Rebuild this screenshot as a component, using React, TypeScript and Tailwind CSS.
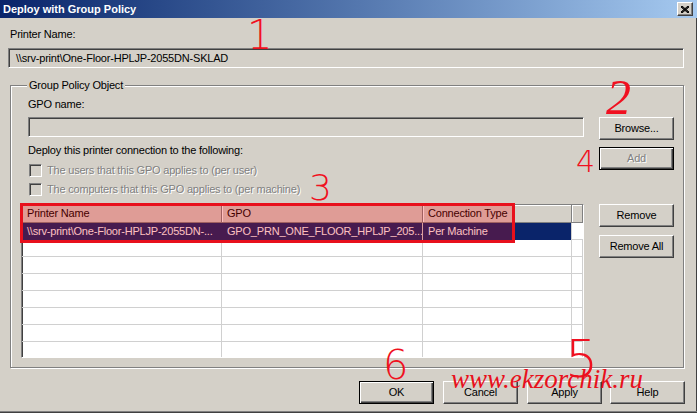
const btn =
  "h-[23px] w-[75px] flex items-center justify-center bg-[#d4d0c8] border border-t-white border-l-white border-r-[#404040] border-b-[#404040] shadow-[inset_-1px_-1px_0_#808080] text-[11px] text-black";
const defBtn =
  "h-[23px] w-[75px] flex items-center justify-center bg-[#d4d0c8] border border-black shadow-[inset_1px_1px_0_#fff,inset_-1px_-1px_0_#404040,inset_-2px_-2px_0_#808080] text-[11px]";
const sunken =
  "border border-t-[#808080] border-l-[#808080] border-b-white border-r-white shadow-[inset_1px_1px_0_#404040]";
const disabled = "text-[#808080] [text-shadow:1px_1px_0_#fff]";
const mark = "absolute text-[#f01020] leading-none font-['DejaVu_Sans',sans-serif] font-extralight tracking-normal";

const columns = ["Printer Name", "GPO", "Connection Type", ""];

export default function App() {
  const rows = [0, 1, 2, 3, 4, 5, 6, 7];

  return (
    <div className="relative w-[697px] h-[413px] overflow-hidden bg-[#d4d0c8] font-['Liberation_Sans',Arial,sans-serif] text-[11px] tracking-[-0.2px] text-black shadow-[inset_0_-1px_0_#404040,inset_0_-2px_0_#808080,inset_-1px_0_0_#404040]">
      {/* title bar */}
      <div className="h-[18px] flex items-center bg-gradient-to-r from-[#0a246a] to-[#a6caf0] pl-[3px] pr-[4px]">
        <span className="text-white font-bold text-[11px] tracking-normal leading-none">
          Deploy with Group Policy
        </span>
        <button className="ml-auto w-[16px] h-[14px] flex items-center justify-center bg-[#d4d0c8] border border-t-white border-l-white border-r-[#404040] border-b-[#404040] shadow-[inset_-1px_-1px_0_#808080]">
          <svg width="8" height="7" viewBox="0 0 8 7">
            <path d="M0 0L8 7M1 0L8 6M0 1L7 7M8 0L0 7M7 0L0 6M8 1L1 7" stroke="#000" strokeWidth="1" />
          </svg>
        </button>
      </div>

      <div className="pl-[8px] pr-[13px]">
        <div className="mt-[10px] ml-[2px] h-[13px] leading-[13px]">Printer Name:</div>
        <div className={`mt-[7px] h-[20px] flex items-center pl-[7px] ${sunken}`}>
          \\srv-print\One-Floor-HPLJP-2055DN-SKLAD
        </div>

        {/* group box */}
        <div className="mt-[17px] ml-[2px] h-[283px] border border-[#808080] shadow-[inset_1px_1px_0_#fff,1px_1px_0_#fff] pl-[10px] pr-[9px]">
          <div className="-mt-[7px] ml-[6px] h-[13px] leading-[13px] px-[2px] bg-[#d4d0c8] w-fit">
            Group Policy Object
          </div>
          <div className="flex">
            <div className="w-[563px]">
              <div className="mt-[6px] pl-[7px] h-[13px] leading-[13px]">GPO name:</div>
              <div className={`mt-[6px] ml-[7px] h-[20px] ${sunken}`} />
              <div className="mt-[7px] pl-[7px] h-[13px] leading-[13px]">
                Deploy this printer connection to the following:
              </div>
              <div className="mt-[4px]">
                {[
                  "The users that this GPO applies to (per user)",
                  "The computers that this GPO applies to (per machine)",
                ].map((t) => (
                  <div key={t} className="h-[19px] flex items-center pl-[8px] gap-[5px]">
                    <span className={`w-[13px] h-[13px] bg-[#d4d0c8] ${sunken}`} />
                    <span className={disabled}>{t}</span>
                  </div>
                ))}
              </div>

              {/* list view */}
              <div className={`mt-[5px] h-[154px] overflow-hidden bg-white ${sunken}`}>
                <div className="grid grid-cols-[200px_201px_149px_1fr] h-[18px] bg-[#d4d0c8]">
                  {columns.map((c, i) => (
                    <div
                      key={i}
                      className="pl-[5px] flex items-center border-r border-b border-[#808080] shadow-[inset_1px_1px_0_#fff] whitespace-nowrap overflow-hidden"
                    >
                      {c}
                    </div>
                  ))}
                </div>
                {rows.map((r) => (
                  <div key={r} className="grid grid-cols-[200px_201px_149px_1fr] h-[17px]">
                    {r === 0 ? (
                      <>
                        <div className="pl-[5px] flex items-center bg-[#0a246a] text-white border-r border-[#0a246a] whitespace-nowrap overflow-hidden">
                          \\srv-print\One-Floor-HPLJP-2055DN-...
                        </div>
                        <div className="pl-[5px] flex items-center bg-[#0a246a] text-white border-r border-[#d0d0d0] whitespace-nowrap overflow-hidden">
                          GPO_PRN_ONE_FLOOR_HPLJP_205...
                        </div>
                        <div className="pl-[5px] flex items-center bg-[#0a246a] text-white border-r border-[#d0d0d0] whitespace-nowrap overflow-hidden">
                          Per Machine
                        </div>
                        <div className="border-b border-[#d0d0d0]" />
                      </>
                    ) : (
                      [0, 1, 2, 3].map((c) => (
                        <div key={c} className="border-r border-b border-[#d0d0d0]" />
                      ))
                    )}
                  </div>
                ))}
              </div>
            </div>

            {/* right button column */}
            <div className="ml-[15px] flex flex-col">
              <div className="mt-[25px]">
                <button className={btn}>Browse...</button>
              </div>
              <div className="mt-[7px]">
                <button className={`${defBtn} ${disabled}`}>Add</button>
              </div>
              <div className="mt-[34px]">
                <button className={btn}>Remove</button>
              </div>
              <div className="mt-[8px]">
                <button className={btn}>Remove All</button>
              </div>
            </div>
          </div>
        </div>

        {/* dialog buttons */}
        <div className="mt-[13px] -mr-[1px] flex justify-end gap-[9px]">
          <button className={defBtn}>OK</button>
          <button className={btn}>Cancel</button>
          <button className={btn}>Apply</button>
          <button className={`${btn} -ml-[1px]`}>Help</button>
        </div>
      </div>

      {/* red annotations drawn over the screenshot */}
      <div className="absolute left-[20px] top-[203px] w-[495px] h-[40px] border-[3px] border-[#e8101c] bg-[rgba(255,0,0,0.25)]" />
      <span className={`${mark} left-[247px] top-[15px] text-[40px]`}>1</span>
      <span className={`${mark} left-[606px] top-[72px] text-[50px] font-['Liberation_Serif',serif] italic`}>2</span>
      <span className={`${mark} left-[309px] top-[170px] text-[36px]`}>3</span>
      <span className={`${mark} left-[576px] top-[147px] text-[30px]`}>4</span>
      <span className={`${mark} left-[565px] top-[333px] text-[52px]`}>5</span>
      <span className={`${mark} left-[383px] top-[345px] text-[40px]`}>6</span>
      <span className="absolute left-[451px] top-[366px] text-[#e8101c] text-[27px] leading-none font-['Liberation_Serif',serif] italic tracking-normal">
        www.ekzorchik.ru
      </span>
    </div>
  );
}
